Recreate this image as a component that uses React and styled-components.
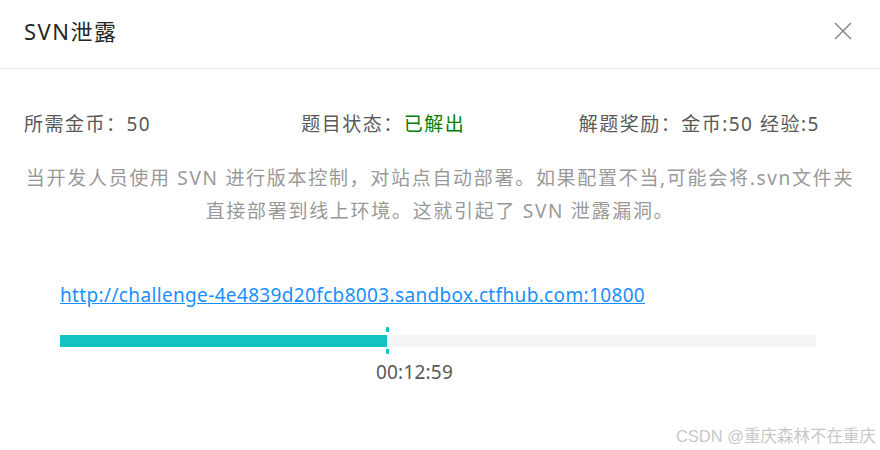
import styled, { createGlobalStyle } from "styled-components";

const GlobalStyle = createGlobalStyle`
  html, body {
    margin: 0;
    padding: 0;
    background: #fff;
  }
  body {
    font-family: "Noto Sans", "Noto Sans CJK SC", sans-serif;
  }
`;

const Modal = styled.div`
  width: 880px;
  height: 450px;
  background: #fff;
  display: flex;
  flex-direction: column;
  position: relative;
  overflow: hidden;
`;

const Header = styled.div`
  height: 69px;
  border-bottom: 1px solid #e8e8e8;
  display: flex;
  align-items: center;
  justify-content: space-between;
  padding: 0 24px;
  box-sizing: border-box;
`;

const Title = styled.div`
  font-size: 22px;
  color: #262626;
  line-height: 1;
  margin-top: -6px;
  letter-spacing: 1.5px;
`;

const Close = styled.button`
  border: 0;
  background: none;
  padding: 0;
  width: 20px;
  height: 20px;
  margin-top: -6px;
  margin-right: 3px;
  cursor: pointer;
  display: flex;
`;

const Body = styled.div`
  padding: 0 24px;
  display: flex;
  flex-direction: column;
`;

const InfoRow = styled.div`
  display: grid;
  grid-template-columns: repeat(3, 1fr);
  margin-top: 40px;
  font-size: 19px;
  letter-spacing: 1.5px;
  color: #595959;
  line-height: 30px;
`;

const Status = styled.span`
  color: #008000;
`;

const Desc = styled.p`
  margin: 23px 0 0;
  text-align: center;
  font-size: 19px;
  letter-spacing: 1.7px;
  line-height: 33px;
  color: #999;
  white-space: nowrap;
`;

const Challenge = styled.div`
  padding: 0 40px 0 36px;
  margin-top: 52px;
  display: flex;
  flex-direction: column;
`;

const Link = styled.a`
  font-size: 19px;
  color: #1890ff;
  text-decoration: underline;
  line-height: 30px;
  letter-spacing: 0.35px;
  align-self: flex-start;
`;

const Track = styled.div`
  position: relative;
  height: 12px;
  background: #f5f5f5;
  margin-top: 25px;
`;

const Fill = styled.div`
  height: 100%;
  background: #13c2c2;
`;

const Marker = styled.div`
  position: absolute;
  top: -8px;
  bottom: -7px;
  width: 3px;
  margin-left: -1px;
  background: linear-gradient(
    #13c2c2 0 5px,
    transparent 5px calc(100% - 5px),
    #13c2c2 calc(100% - 5px)
  );
  border-radius: 1px;
`;

const Timer = styled.div`
  font-size: 19px;
  color: #595959;
  line-height: 30px;
  margin-top: 10px;
  letter-spacing: 0.2px;
`;

const Watermark = styled.div`
  position: absolute;
  right: 4px;
  bottom: 4px;
  font-family: "Liberation Sans", "Noto Sans CJK SC", sans-serif;
  font-size: 16.5px;
  color: #c8c8c8;
  line-height: 20px;
`;

const progress = 43.25;

export default function App() {
  return (
    <>
      <GlobalStyle />
      <Modal>
        <Header>
          <Title>SVN泄露</Title>
          <Close aria-label="关闭">
            <svg width="20" height="20" viewBox="0 0 20 20">
              <path d="M2 2L18 18M18 2L2 18" stroke="#8c8c8c" strokeWidth="1.6" fill="none" />
            </svg>
          </Close>
        </Header>
        <Body>
          <InfoRow>
            <div>所需金币：50</div>
            <div>
              题目状态：<Status>已解出</Status>
            </div>
            <div>解题奖励：金币:50 经验:5</div>
          </InfoRow>
          <Desc>
            当开发人员使用 SVN 进行版本控制，对站点自动部署。如果配置不当,可能会将.svn文件夹
            <br />
            直接部署到线上环境。这就引起了 SVN 泄露漏洞。
          </Desc>
          <Challenge>
            <Link href="#">http://challenge-4e4839d20fcb8003.sandbox.ctfhub.com:10800</Link>
            <Track>
              <Fill style={{ width: `${progress}%` }} />
              <Marker style={{ left: `${progress}%` }} />
            </Track>
            <Timer style={{ paddingLeft: `calc(${progress}% - 11px)` }}>00:12:59</Timer>
          </Challenge>
        </Body>
        <Watermark>CSDN @重庆森林不在重庆</Watermark>
      </Modal>
    </>
  );
}
